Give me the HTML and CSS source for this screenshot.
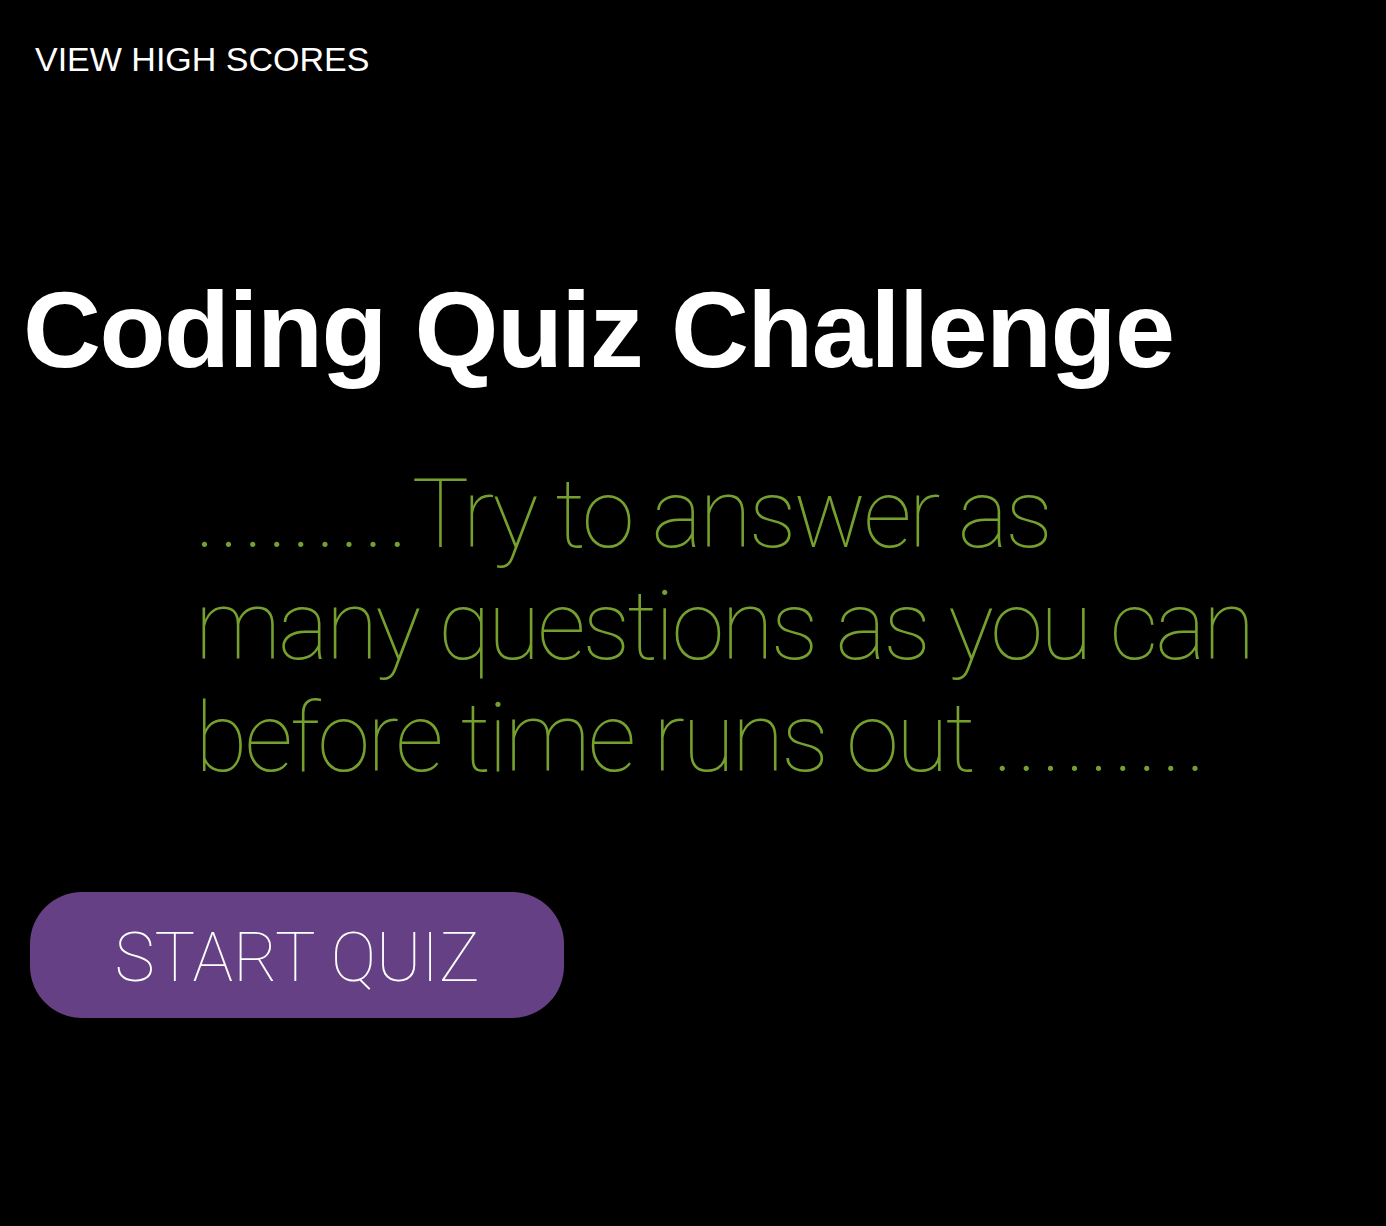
FILE: index.html
```html
<!DOCTYPE html>
<html lang="en">
<head>
<meta charset="utf-8">
<title>Coding Quiz Challenge</title>
<link rel="stylesheet" href="styles.css">
</head>
<body>
  <header class="top-bar">
    <a class="scores-link" href="#">VIEW HIGH SCORES</a>
  </header>
  <main class="intro">
    <h1 class="title">Coding Quiz Challenge</h1>
    <p class="tagline"><span class="dots">.........</span>Try to answer as<br>many questions as you can<br>before time runs out <span class="dots">.........</span></p>
    <button class="start-btn" type="button">START QUIZ</button>
  </main>
</body>
</html>
```
FILE: styles.css
```css
html, body {
  margin: 0;
  padding: 0;
  background: #000;
}

body {
  min-height: 1226px;
  font-family: "Liberation Sans", Arial, Helvetica, sans-serif;
  color: #fff;
}

.top-bar {
  padding: 39px 0 0 35px;
}

.scores-link {
  display: inline-block;
  font-size: 34px;
  line-height: 40px;
  color: #fff;
  text-decoration: none;
}

.intro {
  display: flex;
  flex-direction: column;
  align-items: flex-start;
  padding-left: 23px;
}

.title {
  margin: 189px 0 0 0;
  font-size: 108px;
  line-height: 124px;
  font-weight: 700;
  letter-spacing: -1.5px;
  color: #fff;
}

.tagline {
  margin: 66px 0 0 172px;
  font-family: Roboto, "Liberation Sans", sans-serif;
  font-weight: 100;
  font-size: 96px;
  line-height: 112px;
  letter-spacing: -3px;
  color: #76a02e;
  white-space: nowrap;
}

.dots {
  letter-spacing: 3.5px;
}

.start-btn {
  margin: 98px 0 0 7px;
  width: 534px;
  height: 126px;
  border: none;
  border-radius: 52px;
  background: #664084;
  color: #fff;
  font-family: Roboto, "Liberation Sans", sans-serif;
  font-weight: 100;
  font-size: 68px;
  line-height: 1;
  padding: 6px 0 0 0;
  display: flex;
  align-items: center;
  justify-content: center;
  cursor: pointer;
}
```
